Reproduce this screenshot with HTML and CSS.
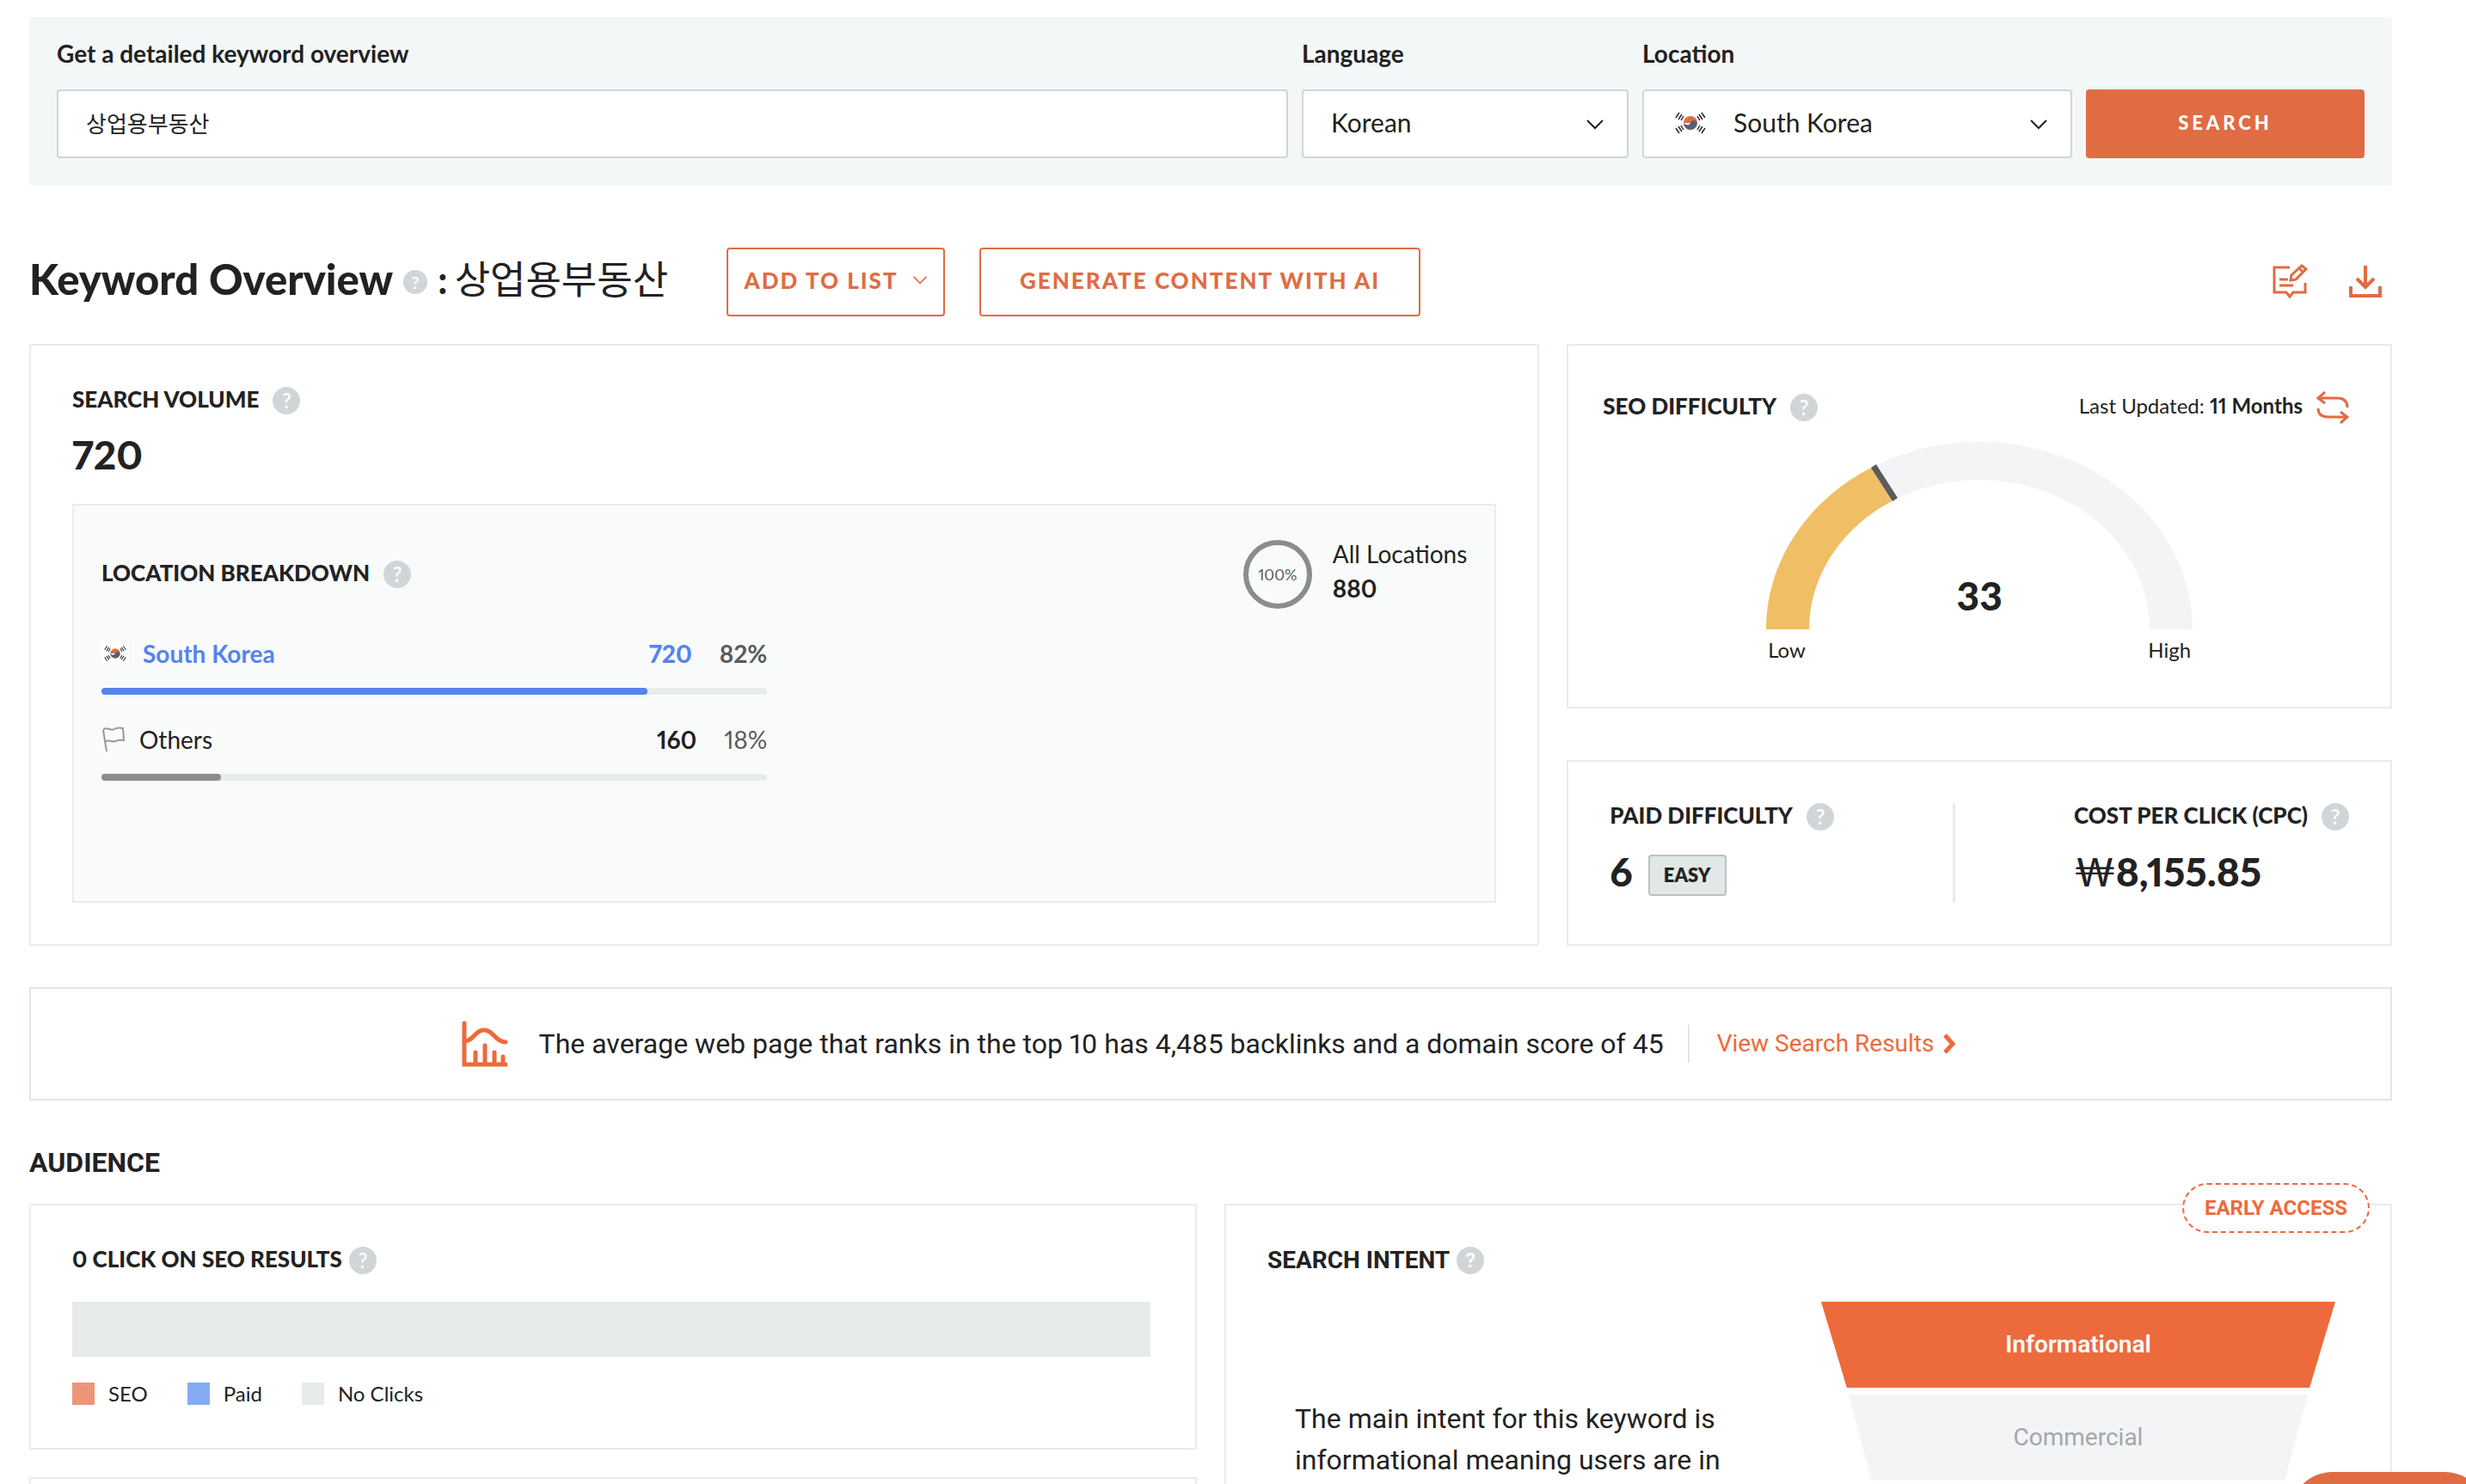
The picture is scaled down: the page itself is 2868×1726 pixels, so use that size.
FILE: index.html
```html
<!DOCTYPE html>
<html lang="en">
<head>
    <meta charset="UTF-8">
    <meta name="viewport" content="width=device-width, initial-scale=1.0">
    <title>Keyword Overview</title>
    <link rel="stylesheet" href="styles.css">
</head>
<body>
    <!-- Shared icons -->
    <svg class="sprite" width="0" height="0" aria-hidden="true">
        <symbol id="flag-kr" viewBox="0 0 36 26">
            <path d="M10 13a8 8 0 0 1 16 0z" fill="#e06c43"/>
            <path d="M10 13a8 8 0 0 0 16 0c-2-4-6-4-8 0s-6 2-8 0z" fill="#555f73"/>
            <g stroke="#222" stroke-width="1.4">
                <path d="M1 7l4-6M4 9l4-6M7 10l3-5"/>
                <path d="M35 7l-4-6M32 9l-4-6M29 10l-3-5"/>
                <path d="M1 19l4 6M4 17l4 6M7 16l3 5"/>
                <path d="M35 19l-4 6M32 17l-4 6M29 16l-3 5"/>
            </g>
        </symbol>
        <symbol id="chevron" viewBox="0 0 22 14">
            <path d="M2 2l9 9 9-9" fill="none" stroke="currentColor" stroke-width="2"/>
        </symbol>
    </svg>

    <main class="page">
        <form class="search-panel">
            <div class="field field-keyword">
                <label for="keyword">Get a detailed keyword overview</label>
                <input type="text" id="keyword" value="상업용부동산">
            </div>
            <div class="field field-language">
                <label for="language">Language</label>
                <div class="select-box">
                    <select id="language">
                        <option>Korean</option>
                    </select>
                    <svg class="chevron"><use href="#chevron"/></svg>
                </div>
            </div>
            <div class="field field-location">
                <label for="location">Location</label>
                <div class="select-box">
                    <svg class="select-flag"><use href="#flag-kr"/></svg>
                    <select id="location" class="with-flag">
                        <option>South Korea</option>
                    </select>
                    <svg class="chevron"><use href="#chevron"/></svg>
                </div>
            </div>
            <button type="submit" class="btn-search">SEARCH</button>
        </form>

        <div class="title-row">
            <h1>Keyword Overview</h1>
            <button type="button" class="help help-small">?</button>
            <p class="title-keyword"><b>:</b>상업용부동산</p>
            <button type="button" class="btn-outline btn-list">ADD TO LIST
                <svg class="chevron-small"><use href="#chevron"/></svg>
            </button>
            <button type="button" class="btn-outline btn-ai">GENERATE CONTENT WITH AI</button>
            <div class="title-actions">
                <button type="button" class="icon-btn" aria-label="Feedback">
                    <svg width="42" height="42" viewBox="0 0 42 42" fill="none" stroke="currentColor" stroke-width="3">
                        <path d="M21 4H3v29h14l4 5 4-5h14V22"/>
                        <path d="M9 18h10M9 25h16"/>
                        <path d="M22 19l1-6L35 2l5 4-12 12zM32 5l4 4"/>
                    </svg>
                </button>
                <button type="button" class="icon-btn" aria-label="Download">
                    <svg width="38" height="38" viewBox="0 0 38 38" fill="none" stroke="currentColor">
                        <path d="M19 0v25M9 15l10 10 10-10" stroke-width="4"/>
                        <path d="M2 24v11h34V24" stroke-width="4"/>
                    </svg>
                </button>
            </div>
        </div>

        <div class="overview">
            <section class="card">
                <div class="card-head">
                    <h2>SEARCH VOLUME</h2>
                    <button type="button" class="help">?</button>
                </div>
                <p class="big volume">720</p>
                <div class="breakdown">
                    <div class="breakdown-head">
                        <h2>LOCATION BREAKDOWN</h2>
                        <button type="button" class="help">?</button>
                        <div class="ring">100%</div>
                        <div class="all-locations">
                            <p>All Locations</p>
                            <b>880</b>
                        </div>
                    </div>
                    <div class="breakdown-body">
                        <div class="locations">
                            <div class="location main-location">
                                <span class="flag-box"><svg><use href="#flag-kr"/></svg></span>
                                <span class="location-name">South Korea</span>
                                <b>720</b>
                                <span class="percent">82%</span>
                            </div>
                            <div class="bar"><div class="bar-fill blue" style="width: 82%"></div></div>
                            <div class="location">
                                <svg class="flag-outline" viewBox="0 0 28 32" fill="none" stroke="#999" stroke-width="2">
                                    <path d="M6 30L2 5M2 5c4-5 9 2 13-1 3-2 6-2 10-1l1 14c-4-1-7 0-10 1-4 2-8-3-12 1"/>
                                </svg>
                                <span class="location-name">Others</span>
                                <b>160</b>
                                <span class="percent">18%</span>
                            </div>
                            <div class="bar"><div class="bar-fill gray" style="width: 18%"></div></div>
                        </div>
                    </div>
                </div>
            </section>

            <div class="side">
                <section class="card seo-card">
                    <div class="card-head">
                        <h2>SEO DIFFICULTY</h2>
                        <button type="button" class="help">?</button>
                        <p class="updated">Last Updated: <b>11 Months</b></p>
                        <button type="button" class="icon-btn" aria-label="Refresh">
                            <svg width="38" height="38" viewBox="0 0 38 38" fill="none" stroke="currentColor" stroke-width="3">
                                <path d="M10 1L2 8l8 6M2 8h22c8 0 12 4 12 11"/>
                                <path d="M28 24l8 6-8 7M36 30H14C6 30 2 27 2 20"/>
                            </svg>
                        </button>
                    </div>
                    <div class="gauge">
                        <svg viewBox="0 0 496 218">
                            <path d="M0 218A248 218 0 0 1 496 218H446A198 174 0 0 0 50 218Z" fill="#f2f4f6"/>
                            <path d="M0 218A248 218 0 0 1 126 28L152 66A198 174 0 0 0 50 218Z" fill="#f0be64"/>
                            <path d="M125 28L150 67" stroke="#595b5e" stroke-width="7"/>
                        </svg>
                        <span class="big gauge-value">33</span>
                        <div class="gauge-labels"><span>Low</span><span>High</span></div>
                    </div>
                </section>

                <section class="card paid-card">
                    <div>
                        <div class="card-head">
                            <h2>PAID DIFFICULTY</h2>
                            <button type="button" class="help">?</button>
                        </div>
                        <div class="paid-value">
                            <span class="big">6</span>
                            <span class="tag">EASY</span>
                        </div>
                    </div>
                    <div class="divider"></div>
                    <div>
                        <div class="card-head">
                            <h2>COST PER CLICK (CPC)</h2>
                            <button type="button" class="help">?</button>
                        </div>
                        <div class="paid-value">
                            <span class="big"><span class="won">₩</span>8,155.85</span>
                        </div>
                    </div>
                </section>
            </div>
        </div>

        <section class="banner">
            <svg width="54" height="54" viewBox="0 0 54 54" fill="none" stroke="currentColor" stroke-width="5" stroke-linecap="round">
                <path d="M3 3v48h48"/>
                <path d="M3 24C14 24 15 11 26 11s13 14 25 14"/>
                <path d="M16 37v12M27 29v20M38 37v12M48 42v7"/>
            </svg>
            <p>The average web page that ranks in the top 10 has 4,485 backlinks and a domain score of 45</p>
            <a href="#">View Search Results
                <svg width="16" height="24" viewBox="0 0 16 24" fill="none" stroke="currentColor" stroke-width="5">
                    <path d="M3 2l9 10-9 10"/>
                </svg>
            </a>
        </section>

        <h2 class="section-title">AUDIENCE</h2>

        <div class="audience">
            <div>
                <section class="card clicks-card">
                    <div class="card-head tight">
                        <h2>0 CLICK ON SEO RESULTS</h2>
                        <button type="button" class="help">?</button>
                    </div>
                    <div class="clicks-bar"></div>
                    <ul class="legend">
                        <li><i class="seo"></i>SEO</li>
                        <li><i class="paid"></i>Paid</li>
                        <li><i class="none"></i>No Clicks</li>
                    </ul>
                </section>
                <section class="card next-card"></section>
            </div>

            <section class="card intent-card">
                <span class="early">EARLY ACCESS</span>
                <div class="card-head tight">
                    <h2>SEARCH INTENT</h2>
                    <button type="button" class="help">?</button>
                </div>
                <div class="intent">
                    <p>The main intent for this keyword is informational meaning users are in</p>
                    <div class="funnel">
                        <div class="step active">Informational</div>
                        <div class="step second">Commercial</div>
                    </div>
                </div>
            </section>
        </div>
    </main>

    <button type="button" class="chat" aria-label="Chat"></button>
</body>
</html>
```
FILE: styles.css
```css
* {
    box-sizing: border-box;
}

body {
    margin: 0;
    background: white;
    color: #222;
    font-family: Lato, "Noto Sans CJK KR", sans-serif;
    font-size: 28px;
    line-height: 40px;
    font-variant-numeric: proportional-nums;
}

h1, h2, p, ul {
    margin: 0;
    padding: 0;
}

button, input, select {
    font-family: inherit;
    font-size: 28px;
    color: inherit;
    margin: 0;
}

button {
    cursor: pointer;
}

svg {
    display: block;
    flex-shrink: 0;
}

.sprite {
    position: absolute;
}

.page {
    height: 100vh;
    overflow: hidden;
    padding: 20px 86px 0 34px;
}

/* Search form */
.search-panel {
    display: flex;
    align-items: flex-end;
    gap: 16px;
    padding: 22px 32px 32px;
    background: #f4f7f8;
    border-radius: 4px;
}

.field label {
    display: block;
    margin-bottom: 22px;
    font-weight: 700;
}

.field-keyword {
    flex: 1;
}

.field-language {
    width: 380px;
}

.field-location {
    width: 500px;
}

.field input,
.field select {
    display: block;
    width: 100%;
    height: 80px;
    padding: 0 32px 4px;
    background: white;
    border: 2px solid #d0d6d8;
    border-radius: 4px;
    appearance: none;
}

.field input {
    font-size: 26px;
}

.field select {
    font-size: 30px;
}

.field select.with-flag {
    padding-left: 104px;
}

.select-box {
    position: relative;
}

.select-box .chevron {
    position: absolute;
    right: 28px;
    top: 34px;
    width: 22px;
    height: 14px;
    pointer-events: none;
}

.select-flag {
    position: absolute;
    left: 38px;
    top: 26px;
    width: 36px;
    height: 26px;
}

.btn-search {
    width: 324px;
    height: 80px;
    padding: 0 0 4px;
    background: #e06c43;
    color: white;
    border: none;
    border-radius: 4px;
    font-size: 22px;
    font-weight: 900;
    letter-spacing: 4px;
}

/* Title */
.title-row {
    display: flex;
    align-items: center;
    height: 80px;
    margin-top: 72px;
}

h1 {
    padding-bottom: 8px;
    font-size: 49px;
    font-weight: 900;
    line-height: 64px;
}

.title-keyword {
    margin-right: 68px;
    padding-bottom: 6px;
    font-size: 45px;
    line-height: 64px;
}

.title-keyword b {
    margin-right: 8px;
}

.btn-outline {
    display: flex;
    align-items: center;
    justify-content: center;
    height: 80px;
    padding: 0 0 4px;
    background: white;
    border: 2px solid #e06c43;
    border-radius: 4px;
    color: #e06c43;
    font-size: 26px;
    font-weight: 900;
    letter-spacing: 2px;
}

.btn-list {
    width: 254px;
    gap: 16px;
    margin-right: 40px;
}

.btn-ai {
    width: 513px;
}

.chevron-small {
    width: 18px;
    height: 12px;
}

.title-actions {
    display: flex;
    gap: 48px;
    margin-left: auto;
    padding-right: 12px;
}

.icon-btn {
    padding: 0;
    background: none;
    border: none;
    color: #e06c43;
}

.help {
    flex-shrink: 0;
    width: 32px;
    height: 32px;
    padding: 0;
    background: #d0d6d8;
    border: none;
    border-radius: 50%;
    color: white;
    font-size: 24px;
    line-height: 32px;
    font-weight: 600;
}

.help-small {
    width: 28px;
    height: 28px;
    margin: 0 12px;
    font-size: 20px;
    line-height: 28px;
}

/* Cards */
.card {
    padding: 48px;
    background: white;
    border: 2px solid #e8ecec;
}

.card-head {
    display: flex;
    align-items: center;
    gap: 16px;
    height: 32px;
}

.card-head.tight {
    gap: 8px;
}

h2 {
    padding-bottom: 4px;
    font-size: 26px;
    font-weight: 900;
    line-height: 32px;
    white-space: nowrap;
}

.big {
    font-size: 46px;
    font-weight: 900;
    line-height: 46px;
}

.overview {
    display: grid;
    grid-template-columns: 1.83fr 1fr;
    gap: 32px;
    margin-top: 32px;
}

.volume {
    margin: 24px 0 34px;
}

.breakdown {
    height: 464px;
    padding: 40px 32px;
    background: #f9fbfa;
    border: 2px solid #e8ecec;
}

.breakdown-head {
    display: flex;
    align-items: center;
    gap: 16px;
    height: 80px;
}

.ring {
    display: flex;
    align-items: center;
    justify-content: center;
    width: 80px;
    height: 80px;
    margin-left: auto;
    border: 6px solid #8c8c8c;
    border-radius: 50%;
    color: #595b5e;
    font-size: 18px;
}

.all-locations {
    margin-left: 8px;
    padding-bottom: 8px;
}

.breakdown-body {
    display: grid;
    grid-template-columns: 1fr 1fr;
    gap: 40px;
}

.location {
    display: flex;
    align-items: center;
    margin: 32px 0 20px;
}

.location b {
    margin-left: auto;
}

.location-name {
    margin-left: 16px;
}

.main-location {
    color: #5484ec;
    font-weight: 700;
}

.percent {
    margin-left: 32px;
    color: #595b5e;
}

.flag-box {
    display: flex;
    align-items: center;
    justify-content: center;
    width: 32px;
    height: 24px;
    background: white;
}

.flag-box svg {
    width: 26px;
    height: 20px;
}

.flag-outline {
    width: 28px;
    height: 32px;
}

.bar {
    height: 8px;
    background: #e8ecec;
    border-radius: 4px;
}

.bar-fill {
    height: 8px;
    border-radius: 4px;
}

.blue {
    background: #5484ec;
}

.gray {
    background: #8c8c8c;
}

/* Right column */
.side {
    display: flex;
    flex-direction: column;
    gap: 60px;
}

.seo-card {
    padding: 56px 40px 50px;
}

.seo-card .card-head {
    padding-right: 8px;
}

.updated {
    margin-left: auto;
    padding-bottom: 4px;
    font-size: 24px;
}

.gauge {
    position: relative;
    width: 496px;
    margin: 24px auto 0;
}

.gauge-value {
    position: absolute;
    left: 0;
    right: 0;
    top: 156px;
    text-align: center;
}

.gauge-labels {
    display: flex;
    justify-content: space-between;
    margin-top: 8px;
    padding: 0 2px;
    font-size: 24px;
    line-height: 32px;
}

.paid-card {
    display: flex;
    justify-content: space-between;
}

.paid-value {
    display: flex;
    align-items: flex-start;
    gap: 18px;
    height: 56px;
    margin-top: 28px;
}

.paid-value .big {
    line-height: 40px;
}

.won {
    font-weight: 400;
}

.tag {
    padding: 0 16px;
    background: #e2e8e7;
    border: 2px solid #b9c3c2;
    border-radius: 4px;
    font-size: 22px;
    font-weight: 800;
    line-height: 44px;
}

.divider {
    width: 3px;
    background: #e8ecec;
}

/* Backlinks banner */
.banner {
    display: flex;
    align-items: center;
    justify-content: center;
    height: 132px;
    margin-top: 48px;
    padding-right: 4px;
    border: 2px solid #e0e6e5;
    color: #ed6a3c;
    font-family: Roboto, sans-serif;
}

.banner p {
    margin: 0 28px 0 36px;
    color: #222;
    font-size: 32px;
}

.banner a {
    display: flex;
    align-items: center;
    gap: 10px;
    padding-left: 32px;
    border-left: 2px solid #e0e6e5;
    color: #ed6a3c;
    font-size: 28px;
    line-height: 44px;
    text-decoration: none;
}

/* Audience */
.section-title {
    margin: 48px 0 24px;
    padding: 0;
    font-family: Roboto, sans-serif;
    font-size: 32px;
    font-weight: 700;
    line-height: 48px;
}

.audience {
    display: grid;
    grid-template-columns: 1fr 1fr;
    gap: 32px;
}

.clicks-card {
    padding-right: 52px;
}

.clicks-bar {
    height: 64px;
    margin-top: 32px;
    background: #e7ebec;
}

.legend {
    display: flex;
    gap: 46px;
    margin-top: 28px;
    font-size: 24px;
    line-height: 30px;
    list-style: none;
}

.legend li {
    display: flex;
    align-items: center;
    gap: 16px;
}

.legend i {
    width: 26px;
    height: 26px;
}

.seo {
    background: #ed9677;
}

.paid {
    background: #87abf3;
}

.none {
    background: #e7ebec;
}

.next-card {
    height: 280px;
    margin-top: 32px;
}

.intent-card {
    position: relative;
    padding-right: 64px;
    font-family: Roboto, sans-serif;
}

.intent-card h2 {
    padding: 0;
    font-size: 28px;
    font-weight: 700;
}

.early {
    position: absolute;
    top: -26px;
    right: 24px;
    padding: 0 24px;
    background: white;
    border: 2px dashed #ed6a3c;
    border-radius: 29px;
    color: #ed6a3c;
    font-size: 24px;
    font-weight: 700;
    line-height: 54px;
}

.intent {
    display: flex;
    justify-content: space-between;
    margin-top: 32px;
}

.intent p {
    width: 520px;
    margin: 112px 0 0 32px;
    font-size: 32px;
    line-height: 48px;
}

.funnel {
    width: 598px;
    text-align: center;
}

.step {
    height: 100px;
    margin: 0 auto 8px;
    background: #f2f4f6;
    clip-path: polygon(0 0, 100% 0, 95% 100%, 5% 100%);
    color: #a5a7aa;
    line-height: 100px;
}

.active {
    background: #ed6a3c;
    color: white;
    font-weight: 600;
}

.second {
    width: 534px;
}

/* Floating chat button */
.chat {
    position: fixed;
    right: -25px;
    bottom: -86px;
    width: 230px;
    height: 100px;
    background: #e06c43;
    border: none;
    border-radius: 50px;
}
```
